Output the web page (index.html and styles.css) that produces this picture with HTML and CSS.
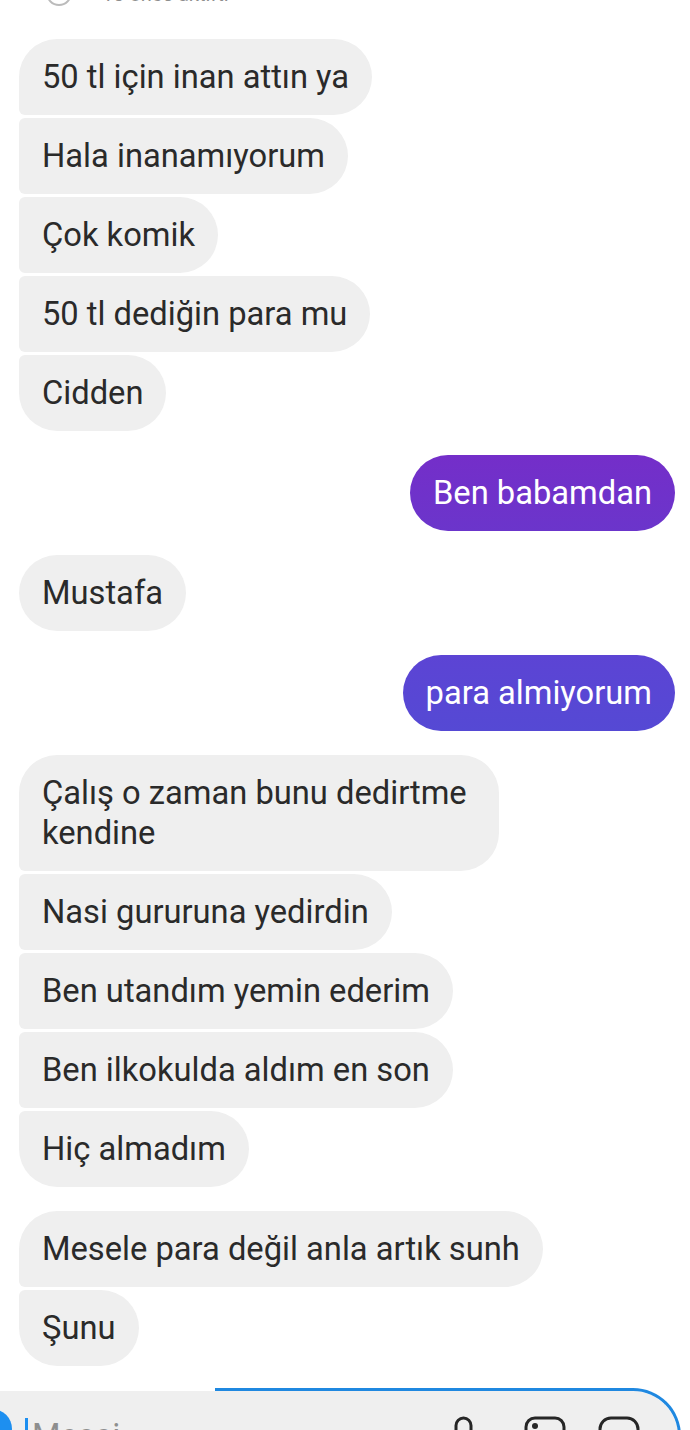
FILE: index.html
```html
<!DOCTYPE html>
<html lang="tr">
<head>
  <meta charset="UTF-8">
  <meta name="viewport" content="width=device-width, initial-scale=1.0">
  <title>Mesajlar</title>
  <link rel="stylesheet" href="styles.css">
</head>
<body>
  <div class="status">
    <span class="status-avatar"></span>
    <span class="status-text">10 önce aktifti</span>
  </div>

  <div class="thread">
    <div class="group in">
      <div class="bubble">50 tl için inan attın ya</div>
      <div class="bubble">Hala inanamıyorum</div>
      <div class="bubble">Çok komik</div>
      <div class="bubble">50 tl dediğin para mu</div>
      <div class="bubble">Cidden</div>
    </div>

    <div class="group out">
      <div class="bubble violet">Ben babamdan</div>
    </div>

    <div class="group in">
      <div class="bubble">Mustafa</div>
    </div>

    <div class="group out">
      <div class="bubble indigo">para almiyorum</div>
    </div>

    <div class="group in">
      <div class="bubble wide">Çalış o zaman bunu dedirtme kendine</div>
      <div class="bubble">Nasi gururuna yedirdin</div>
      <div class="bubble">Ben utandım yemin ederim</div>
      <div class="bubble">Ben ilkokulda aldım en son</div>
      <div class="bubble">Hiç almadım</div>
    </div>

    <div class="group in">
      <div class="bubble">Mesele para değil anla artık sunh</div>
      <div class="bubble">Şunu</div>
    </div>
  </div>

  <div class="composer">
    <span class="camera"></span>
    <span class="cursor"></span>
    <span class="placeholder">Mesaj...</span>
    <div class="tools">
      <svg class="mic" width="24" height="40" viewBox="0 0 24 40"><rect x="4" y="2" width="15" height="30" rx="7.5" fill="none" stroke="#262626" stroke-width="3"/></svg>
      <svg width="42" height="40" viewBox="0 0 42 40"><rect x="2" y="2" width="38" height="36" rx="9" fill="none" stroke="#262626" stroke-width="3"/><circle cx="11" cy="10" r="3" fill="#262626"/></svg>
      <svg width="42" height="40" viewBox="0 0 42 40"><rect x="2" y="2" width="38" height="36" rx="11" fill="none" stroke="#262626" stroke-width="3"/></svg>
    </div>
  </div>
</body>
</html>
```

FILE: styles.css
```css
body {
  margin: 0;
  background: #fff;
  font-family: Roboto, "Noto Sans", sans-serif;
  color: #262626;
  overflow: hidden;
}

.status {
  height: 6px;
  overflow: hidden;
  display: flex;
  align-items: flex-end;
  gap: 30px;
  padding-left: 46px;
}

.status-avatar {
  width: 22px;
  height: 22px;
  border-radius: 50%;
  border: 2px solid #bbb;
  flex: none;
}

.status-text {
  font-size: 20px;
  line-height: 22px;
  color: #8e8e8e;
  margin-bottom: 1px;
}

.thread {
  padding: 33px 15px 0 19px;
  display: flex;
  flex-direction: column;
  gap: 24px;
}

.group {
  display: flex;
  flex-direction: column;
  gap: 3px;
}

.group.in {
  align-items: flex-start;
}

.group.out {
  align-items: flex-end;
}

.bubble {
  font-size: 32.7px;
  line-height: 40px;
  padding: 18px 23px;
  background: #efefef;
  color: #2a2a2a;
  border-radius: 38px;
}

.group.in .bubble {
  border-radius: 6px 38px 38px 6px;
}

.group.in .bubble:first-child {
  border-top-left-radius: 38px;
}

.group.in .bubble:last-child {
  border-bottom-left-radius: 38px;
}

.bubble.wide {
  width: 434px;
  border-top-right-radius: 40px;
}

.bubble.violet {
  background: linear-gradient(#742ec9, #6b35cb);
  color: #fff;
}

.bubble.indigo {
  background: linear-gradient(#5c44d4, #5549d4);
  color: #fff;
}

.composer {
  margin-top: 25px;
  margin-right: 12px;
  height: 60px;
  background: #efefef;
  border-top-right-radius: 46px;
  position: relative;
  display: flex;
  align-items: flex-start;
}

.composer::after {
  content: "";
  position: absolute;
  left: 215px;
  right: -3px;
  top: -3px;
  height: 60px;
  border-top: 3px solid #1f88e0;
  border-right: 3px solid #1f88e0;
  border-top-right-radius: 48px;
}

.camera {
  width: 40px;
  height: 40px;
  border-radius: 50%;
  background: #1d8ff0;
  margin: 18px 0 0 -28px;
  flex: none;
}

.cursor {
  width: 3px;
  height: 30px;
  background: #1d8ff0;
  margin: 27px 0 0 13px;
  flex: none;
}

.placeholder {
  font-size: 32.7px;
  color: #8e8e8e;
  margin: 26px 0 0 4px;
}

.tools {
  margin-left: auto;
  margin-right: 38px;
  padding-top: 25px;
  display: flex;
  gap: 32px;
}

.tools .mic {
  margin-right: 16px;
}
```
